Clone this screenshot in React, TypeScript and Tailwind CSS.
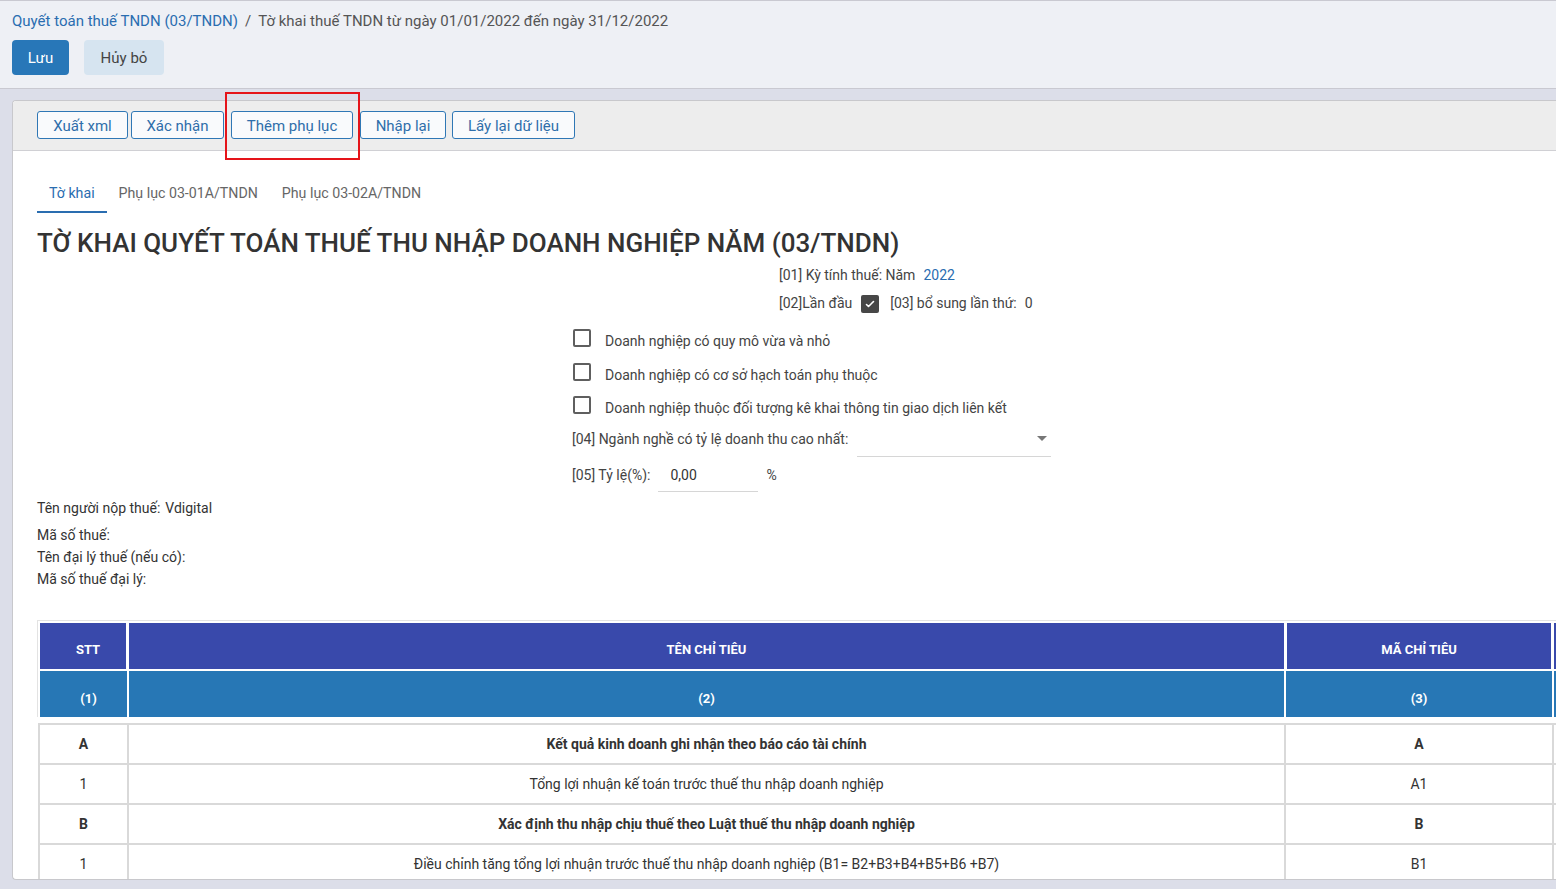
import React from "react";

const toolbarButtons = [
  { label: "Xuất xml", w: "w-[91px]", ml: "ml-0" },
  { label: "Xác nhận", w: "w-[93px]", ml: "ml-[3px]" },
  { label: "Thêm phụ lục", w: "w-[122px]", ml: "ml-[7px]" },
  { label: "Nhập lại", w: "w-[86px]", ml: "ml-[7px]" },
  { label: "Lấy lại dữ liệu", w: "w-[123px]", ml: "ml-[6px]" },
];

const tabs = ["Tờ khai", "Phụ lục 03-01A/TNDN", "Phụ lục 03-02A/TNDN"];

const options = [
  "Doanh nghiệp có quy mô vừa và nhỏ",
  "Doanh nghiệp có cơ sở hạch toán phụ thuộc",
  "Doanh nghiệp thuộc đối tượng kê khai thông tin giao dịch liên kết",
];

const rows = [
  { stt: "A", name: "Kết quả kinh doanh ghi nhận theo báo cáo tài chính", code: "A", bold: true },
  { stt: "1", name: "Tổng lợi nhuận kế toán trước thuế thu nhập doanh nghiệp", code: "A1", bold: false },
  { stt: "B", name: "Xác định thu nhập chịu thuế theo Luật thuế thu nhập doanh nghiệp", code: "B", bold: true },
  { stt: "1", name: "Điều chỉnh tăng tổng lợi nhuận trước thuế thu nhập doanh nghiệp (B1= B2+B3+B4+B5+B6 +B7)", code: "B1", bold: false },
];

const Checkbox = ({ checked = false }: { checked?: boolean }) =>
  checked ? (
    <span className="w-[18px] h-[18px] rounded-[2px] bg-[#474747] flex items-center justify-center">
      <svg width="12" height="12" viewBox="0 0 24 24" fill="none" stroke="white" strokeWidth="3.2" strokeLinecap="round" strokeLinejoin="round">
        <path d="M5 13l4 4L19 7" />
      </svg>
    </span>
  ) : (
    <span className="w-[18px] h-[18px] rounded-[2px] border-2 border-[#5f5f5f] bg-white" />
  );

const App = () => {
  return (
    <div className="relative h-[889px] w-[1556px] overflow-hidden flex flex-col bg-[#dcdee9] font-['Roboto',sans-serif] text-[#333]">
      {/* header */}
      <div className="h-[89px] shrink-0 bg-[#eef0f5] border-t border-b border-[#c9c9d1] px-3">
        <div className="h-[20px] mt-[10px] flex items-center text-[15px] leading-5">
          <span className="text-[#2a6db0]">Quyết toán thuế TNDN (03/TNDN)</span>
          <span className="mx-[7px] text-[#555]">/</span>
          <span className="text-[#555]">Tờ khai thuế TNDN từ ngày 01/01/2022 đến ngày 31/12/2022</span>
        </div>
        <div className="mt-[9px] flex gap-[15px]">
          <button className="h-[35px] w-[57px] rounded-[4px] bg-[#2877b8] text-white text-[15px] pt-[1px]">Lưu</button>
          <button className="h-[35px] w-[80px] rounded-[4px] bg-[#d6e4f0] text-[#444] text-[15px] pt-[1px]">Hủy bỏ</button>
        </div>
      </div>

      {/* card */}
      <div className="flex-1 min-h-0 pl-3 pt-[11px] pb-[9px]">
        <div className="h-full bg-white border border-r-0 border-[#c8c8cc] rounded-l-[4px] overflow-hidden">
          <div className="h-[50px] bg-[#ededed] border-b border-[#d0d0d4] pl-6 pt-[10px] flex">
            {toolbarButtons.map((b) => (
              <button
                key={b.label}
                className={`${b.w} ${b.ml} h-[28px] rounded-[3px] border border-[#2f77b5] bg-[#f9fafc] text-[#2f6eaa] text-[15px] leading-none pt-[2px]`}
              >
                {b.label}
              </button>
            ))}
          </div>

          <div className="pl-6">
            {/* tabs */}
            <div className="mt-[26px] flex text-[14.2px]">
              {tabs.map((t, i) => (
                <div
                  key={t}
                  className={
                    i === 0
                      ? "px-3 pt-[6px] pb-[8px] leading-5 border-b-2 border-[#2a6db0] text-[#2a6db0]"
                      : "px-3 pt-[6px] pb-[8px] leading-5 border-b-2 border-transparent text-[#666]"
                  }
                >
                  {t}
                </div>
              ))}
            </div>

            <h1 className="mt-[14px] h-[32px] leading-8 text-[26px] font-medium text-[#333]">
              TỜ KHAI QUYẾT TOÁN THUẾ THU NHẬP DOANH NGHIỆP NĂM (03/TNDN)
            </h1>

            {/* form */}
            <div className="mt-[4px] text-[14px] text-[#444]">
              <div className="h-[24px] ml-[742px] flex items-center">
                <span>[01] Kỳ tính thuế: Năm</span>
                <span className="ml-2 text-[#2a6db0]">2022</span>
              </div>
              <div className="h-[34px] ml-[742px] flex items-center">
                <span className="-mt-[1px]">[02]Lần đầu</span>
                <span className="ml-[9px]">
                  <Checkbox checked />
                </span>
                <span className="ml-[11px] -mt-[1px]">[03] bổ sung lần thứ:</span>
                <span className="ml-[8px] -mt-[1px]">0</span>
              </div>
              {options.map((o, i) => (
                <div key={o} className={`${i === 0 ? "h-[34px]" : "h-[33px]"} ml-[536px] flex items-center`}>
                  <Checkbox />
                  <span className="ml-[14px] mt-[7px]">{o}</span>
                </div>
              ))}
              <div className="h-[36px] ml-[535px] flex items-center">
                <span>[04] Ngành nghề có tỷ lệ doanh thu cao nhất:</span>
                <div className="ml-[9px] w-[194px] h-[34px] mt-[1px] border-b border-[#d6d6d6] flex items-center justify-end pr-[4px]">
                  <svg width="10" height="6" viewBox="0 0 10 6">
                    <path d="M0 0h10L5 5z" fill="#777" />
                  </svg>
                </div>
              </div>
              <div className="h-[36px] ml-[535px] flex items-center">
                <span>[05] Tỷ lệ(%):</span>
                <div className="ml-[8px] w-[100px] h-[34px] border-b border-[#d6d6d6] flex items-center pl-3 pt-[1px] text-[#333]">0,00</div>
                <span className="ml-2">%</span>
              </div>
            </div>

            <div className="text-[14px] text-[#333]">
              <div className="h-[31px] flex items-center">
                <span>Tên người nộp thuế:</span>
                <span className="ml-[5px]">Vdigital</span>
              </div>
              <div className="h-[22px] flex items-center">Mã số thuế:</div>
              <div className="h-[22px] flex items-center">Tên đại lý thuế (nếu có):</div>
              <div className="h-[22px] flex items-center">Mã số thuế đại lý:</div>
            </div>

            {/* table */}
            <div className="mt-[30px] w-[1700px]">
              <div className="border border-b-0 border-[#e3e3e3] p-[2px] pb-0 flex flex-col gap-[2px] text-white font-bold text-[13px]">
                <div className="grid grid-cols-[86px_1155px_264px_200px] gap-[3px] h-[46px]">
                  <div className="bg-[#3949ab] flex items-center justify-center pt-[8px] pl-[10px]">STT</div>
                  <div className="bg-[#3949ab] flex items-center justify-center pt-[8px]">TÊN CHỈ TIÊU</div>
                  <div className="bg-[#3949ab] flex items-center justify-center pt-[8px]">MÃ CHỈ TIÊU</div>
                  <div className="bg-[#3949ab]" />
                </div>
                <div className="grid grid-cols-[87px_1155px_266px_200px] gap-[2px] h-[46px]">
                  <div className="bg-[#2777b5] flex items-center justify-center pt-[9px] pl-[10px]">(1)</div>
                  <div className="bg-[#2777b5] flex items-center justify-center pt-[9px]">(2)</div>
                  <div className="bg-[#2777b5] flex items-center justify-center pt-[9px]">(3)</div>
                  <div className="bg-[#2777b5]" />
                </div>
              </div>
              <div className="h-[6px]" />
              <div className="ml-[1px] bg-[#d9d9d9] p-[2px] pr-0 grid grid-cols-[87px_1155px_266px_200px] gap-[2px] text-[14px] text-[#333]">
                {rows.map((r, i) => (
                  <React.Fragment key={i}>
                    <div className={`h-[38px] bg-white flex items-center justify-center ${r.bold ? "font-bold" : ""}`}>{r.stt}</div>
                    <div className={`h-[38px] bg-white flex items-center justify-center ${r.bold ? "font-bold" : ""}`}>{r.name}</div>
                    <div className={`h-[38px] bg-white flex items-center justify-center ${r.bold ? "font-bold" : ""}`}>{r.code}</div>
                    <div className="h-[38px] bg-white" />
                  </React.Fragment>
                ))}
              </div>
            </div>
          </div>
        </div>
      </div>

      {/* highlight box */}
      <div className="absolute left-[225px] top-[92px] w-[135px] h-[68px] border-2 border-[#e5141a] pointer-events-none" />
    </div>
  );
};

export default App;
